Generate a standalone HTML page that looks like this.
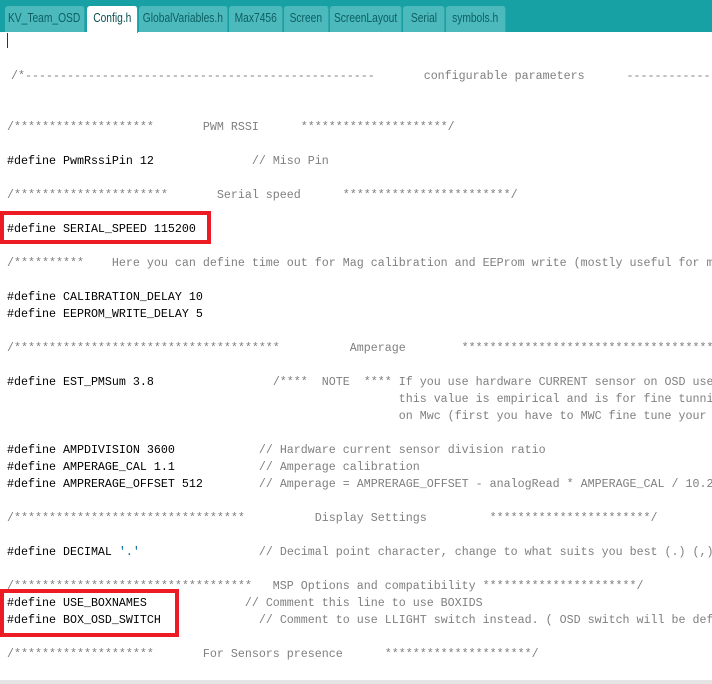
<!DOCTYPE html>
<html><head><meta charset="utf-8"><style>
html,body{margin:0;width:712px;height:684px;overflow:hidden}
body{background:#fff;position:relative;font-family:"Liberation Mono",monospace}
.bar{position:absolute;left:0;top:0;width:712px;height:32px;background:#17a1a5}
.tab{position:absolute;top:6px;height:26px;background:#4cb9bc;color:#0d5f62;font:12.5px "Liberation Sans",sans-serif;line-height:24px;text-align:center;border-radius:3px 3px 0 0;box-sizing:border-box;border-right:1px solid #2ea8ab;overflow:hidden;white-space:nowrap}
.tab span{display:inline-block;transform:scaleX(0.82);transform-origin:center;margin:0 -20px}
.tab.a{background:#fff;color:#0a4f52;height:27px}
.l{position:absolute;left:7px;right:0;overflow:hidden;white-space:pre;font-size:11.67px;line-height:17px;color:#000}
.c{color:#7f7f7f}
.box{position:absolute;border:4px solid #ed1c24;box-sizing:border-box}
.cur{position:absolute;left:7px;top:33px;width:1px;height:15px;background:#333}
.bot{position:absolute;left:0;top:680px;width:712px;height:4px;background:#e4e4e4}
</style></head><body>
<div class="bar"></div>
<div class="tab" style="left:5px;width:80px"><span>KV_Team_OSD</span></div>
<div class="tab a" style="left:87px;width:51px"><span>Config.h</span></div>
<div class="tab" style="left:139px;width:89px"><span>GlobalVariables.h</span></div>
<div class="tab" style="left:229px;width:54px"><span>Max7456</span></div>
<div class="tab" style="left:284px;width:45px"><span>Screen</span></div>
<div class="tab" style="left:330px;width:72px"><span>ScreenLayout</span></div>
<div class="tab" style="left:403px;width:42px"><span>Serial</span></div>
<div class="tab" style="left:446px;width:60px"><span>symbols.h</span></div>
<div class="cur"></div>
<div class="l c" style="top:68px;left:4px"> /*--------------------------------------------------       configurable parameters      ----------------</div>
<div class="l c" style="top:119px">/********************       PWM RSSI      *********************/</div>
<div class="l" style="top:153px">#define PwmRssiPin 12              <span class="c">// Miso Pin</span></div>
<div class="l c" style="top:187px">/**********************       Serial speed      ************************/</div>
<div class="l" style="top:221px">#define SERIAL_SPEED 115200</div>
<div class="l c" style="top:255px">/**********    Here you can define time out for Mag calibration and EEProm write (mostly useful for mag</div>
<div class="l" style="top:289px">#define CALIBRATION_DELAY 10</div>
<div class="l" style="top:306px">#define EEPROM_WRITE_DELAY 5</div>
<div class="l c" style="top:340px">/**************************************          Amperage        ****************************************</div>
<div class="l" style="top:374px">#define EST_PMSum 3.8                 <span class="c">/****  NOTE  **** If you use hardware CURRENT sensor on OSD use</span></div>
<div class="l c" style="top:391px">                                                        this value is empirical and is for fine tunning</div>
<div class="l c" style="top:408px">                                                        on Mwc (first you have to MWC fine tune your</div>
<div class="l" style="top:442px">#define AMPDIVISION 3600            <span class="c">// Hardware current sensor division ratio</span></div>
<div class="l" style="top:459px">#define AMPERAGE_CAL 1.1            <span class="c">// Amperage calibration</span></div>
<div class="l" style="top:476px">#define AMPRERAGE_OFFSET 512        <span class="c">// Amperage = AMPRERAGE_OFFSET - analogRead * AMPERAGE_CAL / 10.23</span></div>
<div class="l c" style="top:510px">/*********************************          Display Settings         ***********************/</div>
<div class="l" style="top:544px">#define DECIMAL <span style="color:#006699">'.'</span>                 <span class="c">// Decimal point character, change to what suits you best (.) (,)</span></div>
<div class="l c" style="top:578px">/**********************************   MSP Options and compatibility **********************/</div>
<div class="l" style="top:595px">#define USE_BOXNAMES              <span class="c">// Comment this line to use BOXIDS</span></div>
<div class="l" style="top:612px">#define BOX_OSD_SWITCH              <span class="c">// Comment to use LLIGHT switch instead. ( OSD switch will be defa</span></div>
<div class="l c" style="top:646px">/********************       For Sensors presence      *********************/</div>
<div class="box" style="left:0;top:211px;width:211px;height:33px"></div>
<div class="box" style="left:0;top:589px;width:179px;height:48px"></div>
<div class="bot"></div>
</body></html>
